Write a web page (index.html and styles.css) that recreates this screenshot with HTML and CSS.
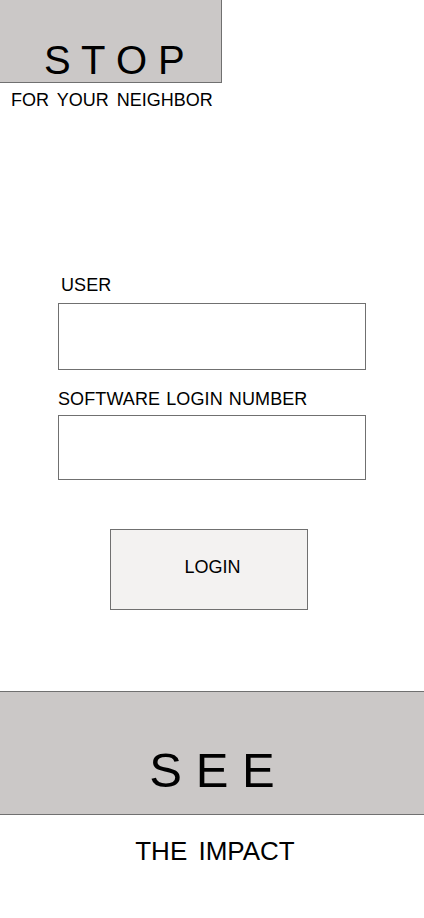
FILE: index.html
```html
<!DOCTYPE html>
<html lang="en">
<head>
    <meta charset="UTF-8">
    <meta name="viewport" content="width=device-width, initial-scale=1.0">
    <title>Stop For Your Neighbor</title>
    <link rel="stylesheet" href="styles.css">
</head>
<body>
    <div class="stop-box">
        <h1 class="stop-title">S T O P</h1>
    </div>
    <p class="tagline">FOR YOUR NEIGHBOR</p>

    <form class="login-form" onsubmit="return false;">
        <label class="field-label label-user" for="user">USER</label>
        <input type="text" id="user" class="field-input input-user">

        <label class="field-label label-number" for="number">SOFTWARE LOGIN NUMBER</label>
        <input type="text" id="number" class="field-input input-number">

        <button type="submit" class="btn-login">LOGIN</button>
    </form>

    <div class="see-band">
        <h2 class="see-title">S E E</h2>
    </div>
    <p class="impact">THE IMPACT</p>
</body>
</html>
```

FILE: styles.css
```css
*{
    margin: 0;
    padding: 0;
    box-sizing: content-box;
}

body{
    background: #ffffff;
    color: #000000;
    font-family: "Liberation Sans", Arial, sans-serif;
}

.stop-box{
    width: 221px;
    height: 42px;
    padding-top: 40px;
    background-color: #cbc8c7;
    border-right: 1px solid #707070;
    border-bottom: 1px solid #707070;
}

.stop-title{
    font-size: 40px;
    font-weight: normal;
    line-height: 40px;
    padding-left: 44px;
    white-space: pre;
}

.tagline{
    margin-top: 7px;
    padding-left: 11px;
    font-size: 18px;
    line-height: 20px;
    word-spacing: 3px;
}

.login-form{
    width: 308px;
    margin-left: 58px;
    margin-top: 165px;
    display: flex;
    flex-direction: column;
}

.field-label{
    font-size: 18px;
    line-height: 20px;
    word-spacing: 1px;
    letter-spacing: 0.1px;
}

.label-user{
    padding-left: 3px;
}

.field-input{
    display: block;
    width: 306px;
    border: 1px solid #707070;
    background: #ffffff;
    outline: none;
    font-family: inherit;
    font-size: 18px;
}

.input-user{
    height: 65px;
    margin-top: 8px;
}

.label-number{
    margin-top: 19px;
}

.input-number{
    height: 63px;
    margin-top: 6px;
}

.btn-login{
    box-sizing: border-box;
    width: 198px;
    height: 81px;
    margin-top: 49px;
    margin-left: 52px;
    border: 1px solid #707070;
    background-color: #f3f2f1;
    font-family: inherit;
    font-size: 18px;
    color: #000000;
    padding-left: 7px;
    padding-bottom: 4px;
    cursor: pointer;
}

.see-band{
    margin-top: 81px;
    height: 49px;
    padding-top: 54px;
    padding-bottom: 19px;
    background-color: #cbc8c7;
    border-top: 1px solid #707070;
    border-bottom: 1px solid #707070;
    text-align: center;
}

.see-title{
    font-size: 49px;
    font-weight: normal;
    line-height: 49px;
    white-space: pre;
}

.impact{
    margin-top: 21px;
    padding-left: 6px;
    font-size: 26px;
    line-height: 30px;
    text-align: center;
    word-spacing: 4px;
}
```
